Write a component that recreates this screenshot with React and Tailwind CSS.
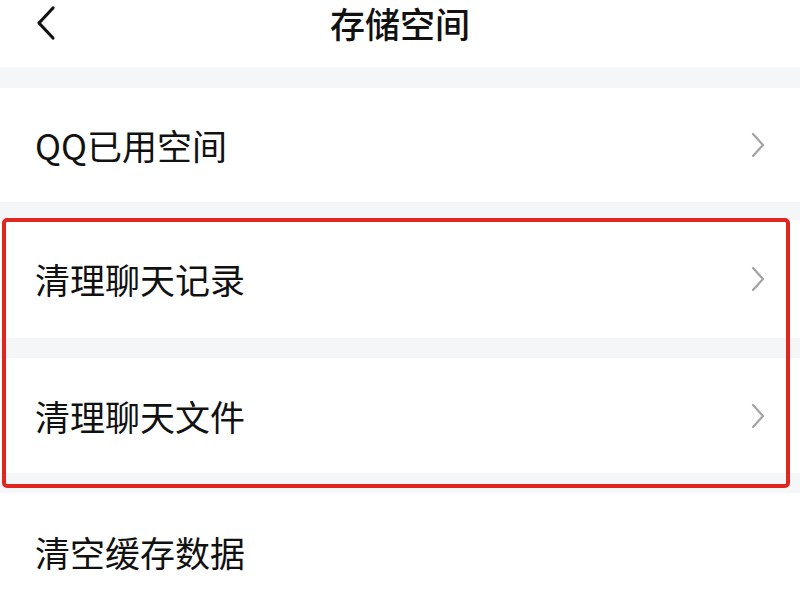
import React from "react";

function Chevron() {
  return (
    <svg width="16" height="26" viewBox="0 0 16 26" className="shrink-0">
      <path d="M3 2 L13 13 L3 24" fill="none" stroke="#a3a3a3" strokeWidth="2.2" strokeLinecap="round" strokeLinejoin="round" />
    </svg>
  );
}

function Row({ label, h, arrow = true }) {
  return (
    <div className={`flex items-center justify-between bg-white pl-[35px] pr-[34px] ${h}`}>
      <span className="text-[35px] leading-[44px] text-[#111111]">{label}</span>
      {arrow && <Chevron />}
    </div>
  );
}

export default function App() {
  return (
    <div
      className="relative w-[800px] h-[600px] overflow-hidden bg-white"
      style={{ fontFamily: '"Noto Sans CJK SC", "Noto Sans", sans-serif' }}
    >
      <header className="relative h-[67px] bg-white">
        <div className="flex h-[45px] items-center pl-[35px]">
          <svg width="22" height="36" viewBox="0 0 22 36">
            <path d="M18 3 L4 18 L18 33" fill="none" stroke="#111111" strokeWidth="3.2" strokeLinecap="round" strokeLinejoin="round" />
          </svg>
        </div>
        <div className="absolute inset-x-0 top-0 flex h-[45px] items-center justify-center">
          <span className="text-[35px] font-medium leading-[45px] text-[#111111]">存储空间</span>
        </div>
      </header>
      <div className="h-[21px] bg-[#f5f6f8]" />
      <Row label="QQ已用空间" h="h-[114px]" />
      <div className="h-[18px] bg-[#f5f6f8]" />
      <Row label="清理聊天记录" h="h-[118px]" />
      <div className="h-[20px] bg-[#f5f6f8]" />
      <Row label="清理聊天文件" h="h-[115px]" />
      <div className="h-[20px] bg-[#f5f6f8]" />
      <Row label="清空缓存数据" h="h-[118px]" arrow={false} />

      <div className="pointer-events-none absolute left-[2px] top-[218px] h-[270px] w-[788px] rounded-[5px] border-4 border-[#e1251f]" />
    </div>
  );
}
